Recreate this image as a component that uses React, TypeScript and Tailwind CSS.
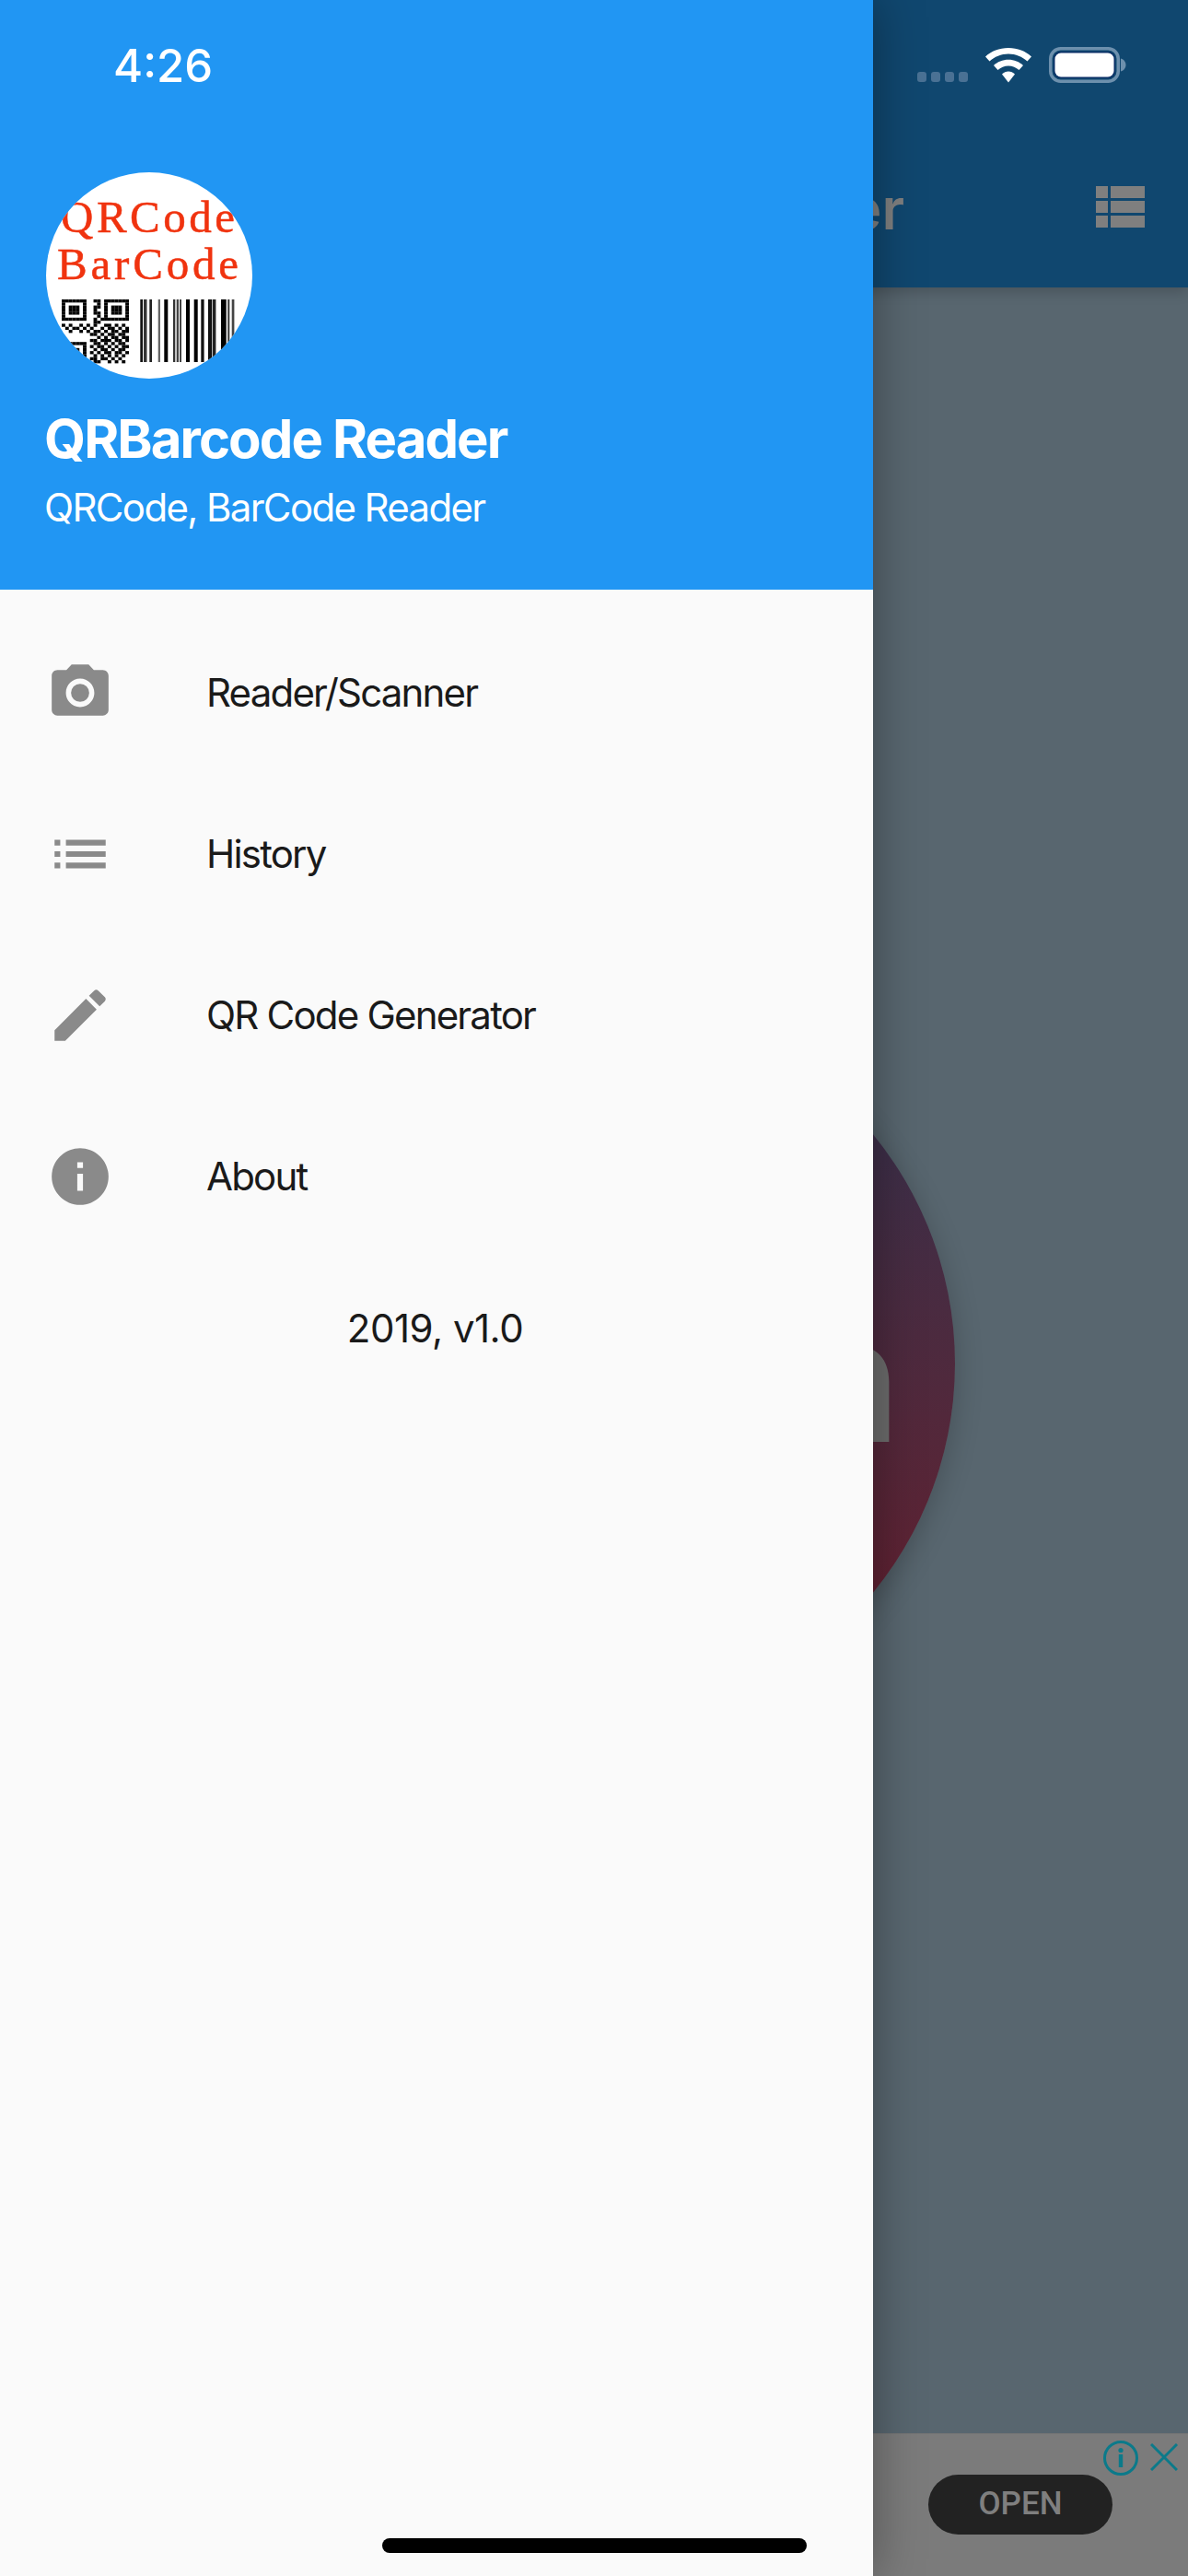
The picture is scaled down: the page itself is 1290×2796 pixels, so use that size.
import React from "react";

const QR = [
  "1111111001101111111",
  "1000001000101000001",
  "1011101001101011101",
  "1011101001001011101",
  "1011101001101011101",
  "1000001000101000001",
  "1111111001011111111",
  "0000000001100000000",
  "1010010101001101010",
  "0101101010010110101",
  "0010010101101011011",
  "0000000011010110110",
  "0000000000101011011",
  "0000000011011101101",
  "1111111001101010110",
  "1000001010110101011",
  "1011101001011010110",
  "1011101010101101101",
  "1011101001010101010",
  "1000001011011010100",
  "1111111001100101010",
];

const BARS: [number, number, string][] = [
  [102.3, 2.7, "#111"], [106, 3.5, "#333"], [112.3, 2.7, "#222"], [121.7, 2.3, "#666"],
  [128.3, 4, "#000"], [138, 2.3, "#333"], [141.7, 2.3, "#444"], [145, 2, "#444"],
  [152, 4, "#000"], [160.7, 4, "#000"], [168.3, 3.3, "#111"], [176, 4, "#111"],
  [180.7, 3.7, "#222"], [190, 5.7, "#000"], [197.3, 2, "#333"], [201.7, 2.7, "#444"],
];

function Logo() {
  return (
    <div className="h-[224px] w-[224px] overflow-hidden rounded-full bg-white">
      <svg width="224" height="224" viewBox="0 0 224 224">
        <text x="16" y="65" fontSize="49" textLength="189" fill="#f0330f" stroke="#f0330f" strokeWidth="0.5" fontFamily="Liberation Serif, serif">QRCode</text>
        <text x="12" y="116" fontSize="49" textLength="197" fill="#f0330f" stroke="#f0330f" strokeWidth="0.5" fontFamily="Liberation Serif, serif">BarCode</text>
        {QR.map((row, y) =>
          row.split("").map((c, x) =>
            c === "1" ? (
              <rect key={`${x}-${y}`} x={17 + x * 3.84} y={138 + y * 3.3} width="3.9" height="3.35" fill="#000" />
            ) : null
          )
        )}
        {BARS.map(([x, w, c]) => (
          <rect key={x} x={x} y="138" width={w} height="68" fill={c} />
        ))}
      </svg>
    </div>
  );
}

const icons = {
  camera: (
    <>
      <circle cx="12" cy="12" r="3.2" />
      <path d="M9 2L7.17 4H4c-1.1 0-2 .9-2 2v12c0 1.1.9 2 2 2h16c1.1 0 2-.9 2-2V6c0-1.1-.9-2-2-2h-3.17L15 2H9zm3 15c-2.76 0-5-2.24-5-5s2.24-5 5-5 5 2.24 5 5-2.24 5-5 5z" />
    </>
  ),
  list: <path d="M3 13h2v-2H3v2zm0 4h2v-2H3v2zm0-8h2V7H3v2zm4 4h14v-2H7v2zm0 4h14v-2H7v2zM7 7v2h14V7H7z" />,
  edit: <path d="M3 17.25V21h3.75L17.81 9.94l-3.75-3.75L3 17.25zM20.71 7.04c.39-.39.39-1.02 0-1.41l-2.34-2.34c-.39-.39-1.02-.39-1.41 0l-1.83 1.83 3.75 3.75 1.83-1.83z" />,
  info: <path d="M12 2C6.48 2 2 6.48 2 12s4.48 10 10 10 10-4.48 10-10S17.52 2 12 2zm1 15h-2v-6h2v6zm0-8h-2V7h2v2z" />,
};

function Row({ icon, label }: { icon: keyof typeof icons; label: string }) {
  return (
    <div className="flex h-[175px] items-center pl-[50px]">
      <svg width="74" height="74" viewBox="0 0 24 24" fill="#8a8a8a" className="shrink-0">
        {icons[icon]}
      </svg>
      <span className="ml-[100px] text-[42px] leading-none tracking-[-1.8px] text-[#1a1a1a]">{label}</span>
    </div>
  );
}

function StatusIcons() {
  return (
    <div className="flex items-end justify-end gap-[19px] pr-[67px] pt-[51px]">
      <div className="flex gap-[5px] pb-[1px]">
        <div className="h-[11px] w-[10px] rounded-[3px] bg-[#4a7194]" />
        <div className="h-[11px] w-[10px] rounded-[3px] bg-[#4a7194]" />
        <div className="h-[11px] w-[10px] rounded-[3px] bg-[#4a7194]" />
        <div className="h-[11px] w-[10px] rounded-[3px] bg-[#4a7194]" />
      </div>
      <svg width="50" height="38" viewBox="0 0 50 38" fill="#fff">
        <path d="M0 9.5C6.5 3.5 15 0 25 0C35 0 43.5 3.5 50 9.5L45.5 14.5C40 9.5 33 6.5 25 6.5C17 6.5 10 9.5 4.5 14.5Z" />
        <path d="M9 19C13 15.2 18.8 12.8 25 12.8C31.2 12.8 37 15.2 41 19L36.5 24C33.4 21.1 29.4 19.4 25 19.4C20.6 19.4 16.6 21.1 13.5 24Z" />
        <path d="M18 28.5C20 26.6 22.4 25.6 25 25.6C27.6 25.6 30 26.6 32 28.5L25 37.5Z" />
      </svg>
      <svg width="84" height="39" viewBox="0 0 84 39">
        <rect x="1.75" y="1.75" width="73.5" height="35.5" rx="11" fill="none" stroke="#6d90ad" strokeWidth="3.5" />
        <rect x="5" y="5" width="67" height="29" rx="8" fill="#0a2f66" />
        <rect x="6.5" y="6.5" width="64" height="26" rx="6.5" fill="#fff" />
        <path d="M78 12.5C81.5 13.5 83.5 16.5 83.5 19.5C83.5 22.5 81.5 25.5 78 26.5Z" fill="#6d90ad" />
      </svg>
    </div>
  );
}

export default function App() {
  return (
    <div className="relative flex h-[2796px] w-[1290px] flex-col overflow-hidden bg-[#58666f] font-['Inter',sans-serif]">
      {/* App behind the drawer */}
      <header className="relative z-10 h-[312px] shrink-0 bg-[#10476f] shadow-[0_4px_14px_rgba(0,0,0,0.2)]">
        <StatusIcons />
        <div className="mt-[112px] flex h-[45px] items-end justify-end pr-[47px]">
          <span className="mr-[208px] translate-y-[2px] whitespace-nowrap text-[62px] font-semibold leading-[45px] text-[#7f7f7f]">QRBarcode Reader</span>
          <svg width="53" height="45" viewBox="0 0 53 45" fill="#7f7f7f" className="shrink-0">
            <rect x="0" y="0" width="13" height="13" />
            <rect x="16" y="0" width="37" height="13" />
            <rect x="0" y="16" width="13" height="13" />
            <rect x="16" y="16" width="37" height="13" />
            <rect x="0" y="32" width="13" height="13" />
            <rect x="16" y="32" width="37" height="13" />
          </svg>
        </div>
      </header>

      <main className="flex flex-1 items-center justify-center pt-[7px]">
        <div className="flex h-[784px] w-[784px] items-center justify-end rounded-full bg-gradient-to-b from-[#30304e] to-[#681a2b] pr-[59px] shadow-[0_8px_30px_rgba(0,0,0,0.22)]">
          <span className="translate-y-[17px] whitespace-nowrap text-[188px] font-semibold leading-none text-[#6b6b6b]">n</span>
        </div>
      </main>

      <footer className="relative flex h-[155px] shrink-0 justify-end border-t border-[#757575] bg-[#7b7b7b] pr-[82px] pt-[44px]">
        <div className="flex h-[65px] w-[200px] items-center justify-center rounded-full bg-[#222222] font-['Roboto',sans-serif] text-[35px] font-medium text-[#7f7f7f]">
          OPEN
        </div>
        <svg width="38" height="38" viewBox="0 0 38 38" fill="none" className="absolute left-[1198px] top-[7px]">
          <circle cx="19" cy="19" r="17.5" stroke="#0b7a8a" strokeWidth="3" />
          <rect x="16.8" y="15" width="4.4" height="14" fill="#0b7a8a" />
          <circle cx="19" cy="10.5" r="2.6" fill="#0b7a8a" />
        </svg>
        <svg width="30" height="30" viewBox="0 0 30 30" fill="none" className="absolute left-[1249px] top-[10px]">
          <path d="M1 1L29 29M29 1L1 29" stroke="#0b7a8a" strokeWidth="3" />
        </svg>
      </footer>

      {/* Drawer */}
      <aside className="absolute inset-y-0 left-0 z-20 flex w-[948px] flex-col bg-[#fafafa] shadow-[0_0_50px_rgba(0,0,0,0.35)]">
        <div className="flex h-[640px] shrink-0 flex-col bg-[#2196f3] pl-[50px] pt-[42px] text-white">
          <div className="ml-[73px] text-[49px] font-medium leading-[60px]">4:26</div>
          <div className="mt-[85px]">
            <Logo />
          </div>
          <div className="-ml-[2px] mt-[30px] whitespace-nowrap text-[58px] font-bold leading-[70px] tracking-[-1.9px]">QRBarcode Reader</div>
          <div className="-ml-[2px] mt-[15px] whitespace-nowrap text-[42px] leading-[50px] tracking-[-1.65px]">QRCode, BarCode Reader</div>
        </div>
        <nav className="pt-[24px]">
          <Row icon="camera" label="Reader/Scanner" />
          <Row icon="list" label="History" />
          <Row icon="edit" label="QR Code Generator" />
          <Row icon="info" label="About" />
        </nav>
        <div className="mr-[3px] mt-[53px] text-center text-[42px] leading-[50px] tracking-[-0.5px] text-[#1a1a1a]">2019, v1.0</div>
      </aside>

      {/* Home indicator */}
      <div className="absolute bottom-[25px] left-[415px] z-30 h-[16px] w-[461px] rounded-full bg-black" />
    </div>
  );
}
